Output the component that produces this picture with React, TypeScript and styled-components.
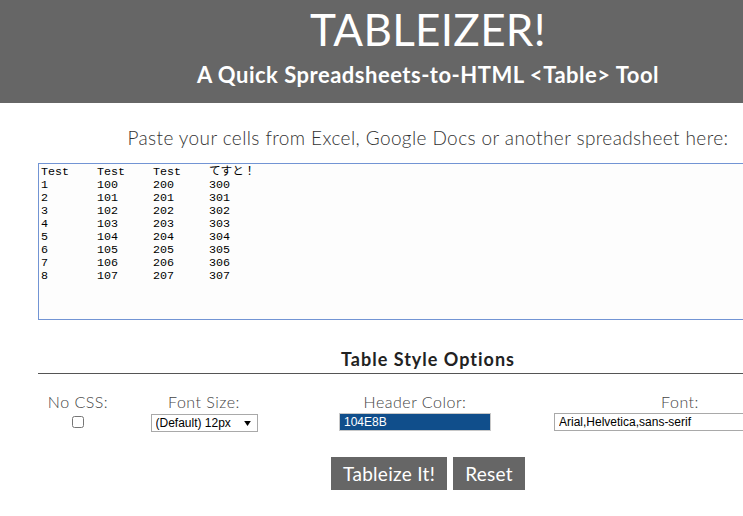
import React, { useEffect, useRef, useState } from 'react';
import styled, { createGlobalStyle } from 'styled-components';

const GlobalStyle = createGlobalStyle`
  html, body {
    margin: 0;
    padding: 0;
    background: #ffffff;
  }
  body {
    font-family: Lato, "Open Sans", sans-serif;
    color: #333333;
    min-width: 856px;
  }
`;

const Page = styled.div`
  width: 856px;
`;

const Header = styled.header`
  background: #666666;
  height: 103px;
  box-sizing: border-box;
  padding-top: 4px;
  text-align: center;
  color: #ffffff;
`;

const Title = styled.h1`
  margin: 0;
  font-size: 44px;
  line-height: 50px;
  font-weight: 400;
  letter-spacing: 0.3px;
`;

const Subtitle = styled.h2`
  margin: 8px 0 0;
  font-size: 22px;
  line-height: 26px;
  font-weight: 700;
  letter-spacing: 0.5px;
`;

const Main = styled.main`
  padding: 0 38px;
`;

const Prompt = styled.p`
  margin: 23px 0 13px;
  text-align: center;
  font-size: 19px;
  line-height: 24px;
  font-weight: 300;
  letter-spacing: 0.4px;
  color: #333333;
`;

const Cells = styled.textarea`
  display: block;
  width: 100%;
  height: 157px;
  box-sizing: border-box;
  margin: 0;
  padding: 2px 2px;
  border: 1px solid #7294d4;
  outline: none;
  resize: none;
  background: #fdfdfd;
  font-family: "Liberation Mono", "Noto Sans CJK JP", monospace;
  font-size: 11.67px;
  line-height: 13px;
  tab-size: 8;
  color: #000000;
  caret-color: #000000;
`;

const SectionTitle = styled.h3`
  margin: 28px 0 0;
  padding-bottom: 3px;
  border-bottom: 1px solid #555555;
  text-align: center;
  font-size: 18px;
  line-height: 22px;
  font-weight: 700;
  letter-spacing: 1px;
  color: #222222;
`;

const Options = styled.div`
  display: grid;
  grid-template-columns: 80px 172px 250px 280px;
  margin-top: 19px;
`;

const Option = styled.div`
  display: flex;
  flex-direction: column;
  align-items: center;
`;

const Label = styled.label`
  font-size: 16px;
  line-height: 18px;
  font-weight: 300;
  letter-spacing: 0.5px;
  color: #444444;
  margin-bottom: 2px;
  white-space: nowrap;
`;

const Check = styled.input`
  margin: 3px 0 0;
  width: 12px;
  height: 12px;
`;

const Select = styled.select`
  appearance: none;
  width: 107px;
  height: 18px;
  box-sizing: border-box;
  margin: 1px 0 0;
  padding: 0 14px 0 4px;
  border: 1px solid #a9a9a9;
  border-radius: 0;
  background-color: #ffffff;
  background-image: url("data:image/svg+xml,%3csvg xmlns='http://www.w3.org/2000/svg' viewBox='0 0 8 6'%3e%3cpath fill='%23000' d='M0 0h8L4 6z'/%3e%3c/svg%3e");
  background-repeat: no-repeat;
  background-position: right 6px center;
  background-size: 7px 5px;
  font-family: "Liberation Sans", Arial, sans-serif;
  font-size: 12px;
  color: #000000;
`;

const TextField = styled.input<{ $width: number; $fill?: string }>`
  width: ${p => p.$width}px;
  height: 18px;
  box-sizing: border-box;
  margin: 0;
  padding: 0 4px;
  border: 1px solid ${p => (p.$fill ? '#c8c8c8' : '#a9a9a9')};
  border-radius: 0;
  background: ${p => p.$fill || '#ffffff'};
  color: ${p => (p.$fill ? '#ffffff' : '#000000')};
  font-family: "Liberation Sans", Arial, sans-serif;
  font-size: 12px;
  outline: none;
`;

const Actions = styled.div`
  display: flex;
  justify-content: center;
  gap: 6px;
  margin-top: 25px;
`;

const Button = styled.button`
  height: 33px;
  padding: 0 12px;
  border: none;
  border-radius: 0;
  background: #666666;
  color: #ffffff;
  font-family: Lato, "Open Sans", sans-serif;
  font-size: 19px;
  font-weight: 400;
  letter-spacing: 0.3px;
  cursor: pointer;
`;

const SAMPLE = [
  'Test\tTest\tTest\tてすと！',
  '1\t100\t200\t300',
  '2\t101\t201\t301',
  '3\t102\t202\t302',
  '4\t103\t203\t303',
  '5\t104\t204\t304',
  '6\t105\t205\t305',
  '7\t106\t206\t306',
  '8\t107\t207\t307',
  '',
].join('\n');

export default function App() {
  const [cells, setCells] = useState(SAMPLE);
  const [size, setSize] = useState('12');
  const [color, setColor] = useState('104E8B');
  const [font, setFont] = useState('Arial,Helvetica,sans-serif');
  const areaRef = useRef<HTMLTextAreaElement>(null);

  useEffect(() => {
    // put the caret after the pasted cells, like the original page
    const el = areaRef.current;
    if (el) {
      el.focus();
      el.setSelectionRange(el.value.length, el.value.length);
    }
  }, []);

  return (
    <Page>
      <GlobalStyle />
      <Header>
        <Title>TABLEIZER!</Title>
        <Subtitle>A Quick Spreadsheets-to-HTML &lt;Table&gt; Tool</Subtitle>
      </Header>
      <Main>
        <Prompt>Paste your cells from Excel, Google Docs or another spreadsheet here:</Prompt>
        <Cells ref={areaRef} value={cells} onChange={e => setCells(e.target.value)} spellCheck={false} />
        <SectionTitle>Table Style Options</SectionTitle>
        <Options>
          <Option>
            <Label htmlFor="nocss">No CSS:</Label>
            <Check id="nocss" type="checkbox" />
          </Option>
          <Option>
            <Label htmlFor="fontsize">Font Size:</Label>
            <Select id="fontsize" value={size} onChange={e => setSize(e.target.value)}>
              <option value="10">10px</option>
              <option value="12">(Default) 12px</option>
              <option value="14">14px</option>
            </Select>
          </Option>
          <Option>
            <Label htmlFor="hcolor">Header Color:</Label>
            <TextField id="hcolor" $width={152} $fill="#104E8B" value={color} onChange={e => setColor(e.target.value)} />
          </Option>
          <Option>
            <Label htmlFor="font">Font:</Label>
            <TextField id="font" $width={252} value={font} onChange={e => setFont(e.target.value)} />
          </Option>
        </Options>
        <Actions>
          <Button>Tableize It!</Button>
          <Button>Reset</Button>
        </Actions>
      </Main>
    </Page>
  );
}
